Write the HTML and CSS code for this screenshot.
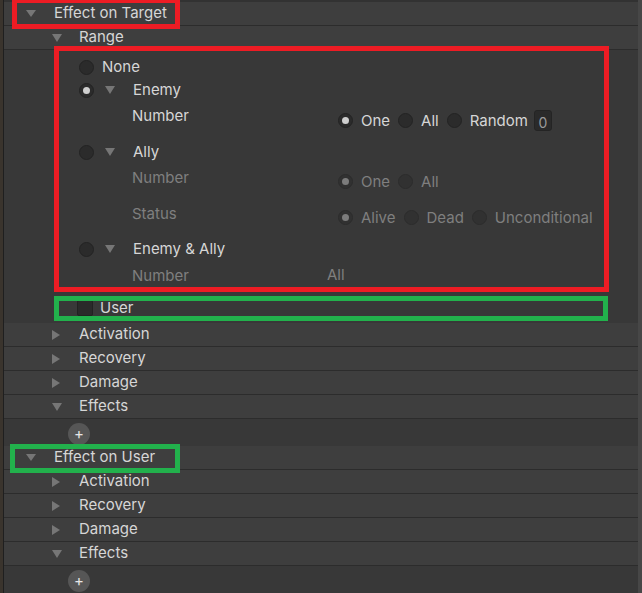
FILE: index.html
```html
<!DOCTYPE html>
<html lang="en">
<head>
    <meta charset="UTF-8">
    <meta name="viewport" content="width=device-width, initial-scale=1.0">
    <title>Skill Inspector</title>
    <link rel="stylesheet" href="styles.css">
</head>
<body>
    <div class="window">
        <div class="edge"></div>
        <div class="panel">
            <div class="row lvl0">
                <span class="fold"><svg width="10" height="7" viewBox="0 0 10 7"><polygon points="0,0 10,0 5,7"/></svg></span>
                <span class="title">Effect on Target</span>
            </div>
            <div class="row lvl1">
                <span class="fold"><svg width="10" height="8" viewBox="0 0 10 8"><polygon points="0,0 10,0 5,8"/></svg></span>
                <span class="title">Range</span>
            </div>

            <div class="range-body">
                <div class="opt opt-none">
                    <span class="radio"></span>
                    <span class="opt-label">None</span>
                </div>
                <div class="opt opt-enemy">
                    <span class="radio on"></span>
                    <span class="fold sub"><svg width="10" height="8" viewBox="0 0 10 8"><polygon points="0,0 10,0 5,8"/></svg></span>
                    <span class="opt-label">Enemy</span>
                </div>
                <div class="field f-num1">
                    <span class="field-label">Number</span>
                    <div class="choices shift4">
                        <span class="radio on"></span><span class="choice">One</span>
                        <span class="radio"></span><span class="choice">All</span>
                        <span class="radio"></span><span class="choice">Random</span>
                        <span class="num-box">0</span>
                    </div>
                </div>
                <div class="opt opt-ally">
                    <span class="radio"></span>
                    <span class="fold sub"><svg width="10" height="8" viewBox="0 0 10 8"><polygon points="0,0 10,0 5,8"/></svg></span>
                    <span class="opt-label">Ally</span>
                </div>
                <div class="field off f-num2">
                    <span class="field-label">Number</span>
                    <div class="choices shift3">
                        <span class="radio on"></span><span class="choice">One</span>
                        <span class="radio"></span><span class="choice">All</span>
                    </div>
                </div>
                <div class="field off f-status">
                    <span class="field-label">Status</span>
                    <div class="choices shift3">
                        <span class="radio on"></span><span class="choice">Alive</span>
                        <span class="radio"></span><span class="choice">Dead</span>
                        <span class="radio"></span><span class="choice">Unconditional</span>
                    </div>
                </div>
                <div class="opt opt-both">
                    <span class="radio"></span>
                    <span class="fold sub"><svg width="10" height="8" viewBox="0 0 10 8"><polygon points="0,0 10,0 5,8"/></svg></span>
                    <span class="opt-label">Enemy &amp; Ally</span>
                </div>
                <div class="field off f-num3">
                    <span class="field-label">Number</span>
                    <span class="value">All</span>
                </div>
                <div class="opt opt-user">
                    <span class="check"></span>
                    <span class="opt-label">User</span>
                </div>
            </div>

            <div class="row lvl1">
                <span class="fold"><svg width="8" height="10" viewBox="0 0 8 10"><polygon points="0,0 8,5 0,10"/></svg></span>
                <span class="title">Activation</span>
            </div>
            <div class="row lvl1">
                <span class="fold"><svg width="8" height="10" viewBox="0 0 8 10"><polygon points="0,0 8,5 0,10"/></svg></span>
                <span class="title">Recovery</span>
            </div>
            <div class="row lvl1">
                <span class="fold"><svg width="8" height="10" viewBox="0 0 8 10"><polygon points="0,0 8,5 0,10"/></svg></span>
                <span class="title">Damage</span>
            </div>
            <div class="row lvl1">
                <span class="fold"><svg width="10" height="8" viewBox="0 0 10 8"><polygon points="0,0 10,0 5,8"/></svg></span>
                <span class="title">Effects</span>
            </div>
            <div class="add-area">
                <button class="add">+</button>
            </div>

            <div class="row lvl0">
                <span class="fold"><svg width="10" height="7" viewBox="0 0 10 7"><polygon points="0,0 10,0 5,7"/></svg></span>
                <span class="title">Effect on User</span>
            </div>
            <div class="row lvl1">
                <span class="fold"><svg width="8" height="10" viewBox="0 0 8 10"><polygon points="0,0 8,5 0,10"/></svg></span>
                <span class="title">Activation</span>
            </div>
            <div class="row lvl1">
                <span class="fold"><svg width="8" height="10" viewBox="0 0 8 10"><polygon points="0,0 8,5 0,10"/></svg></span>
                <span class="title">Recovery</span>
            </div>
            <div class="row lvl1">
                <span class="fold"><svg width="8" height="10" viewBox="0 0 8 10"><polygon points="0,0 8,5 0,10"/></svg></span>
                <span class="title">Damage</span>
            </div>
            <div class="row lvl1">
                <span class="fold"><svg width="10" height="8" viewBox="0 0 10 8"><polygon points="0,0 10,0 5,8"/></svg></span>
                <span class="title">Effects</span>
            </div>
            <div class="add-area last">
                <button class="add">+</button>
            </div>
        </div>
        <div class="scroll"></div>

        <!-- annotation boxes drawn over the inspector -->
        <div class="mark red m-target"></div>
        <div class="mark red m-range"></div>
        <div class="mark green m-user"></div>
        <div class="mark green m-self"></div>
    </div>
</body>
</html>
```

FILE: styles.css
```css
body {
    margin: 0;
    background-color: #383838;
    font-family: Inter, "Noto Sans", sans-serif;
    font-size: 15px;
    color: #d6d6d6;
}
.window {
    position: relative;
    display: flex;
    width: 642px;
    height: 593px;
    overflow: hidden;
}
.edge {
    width: 3px;
    background-color: #3a342d;
    border-right: 1px solid #1f1f1f;
}
.panel {
    flex: 1;
    border-top: 2px solid #323232;
    background-color: #383838;
}
.scroll {
    width: 4px;
    background-color: #474747;
}

/* foldout header rows */
.row {
    display: flex;
    align-items: center;
    height: 23px;
    border-bottom: 1px solid #2c2c2c;
    background-color: #3e3e3e;
}
.row .title {
    line-height: 20px;
    margin-bottom: 2px;
}
.fold {
    display: flex;
    align-items: center;
    width: 10px;
}
.fold svg {
    fill: #767676;
}
.lvl0 {
    padding-left: 22px;
}
.lvl0 .fold {
    margin-right: 18px;
}
.lvl1 {
    padding-left: 48px;
}
.lvl1 .fold {
    margin-right: 17px;
}

/* range options */
.range-body {
    padding: 5px 0 3px 0;
}
.opt,
.field {
    display: flex;
    align-items: center;
    height: 24px;
}
.opt {
    padding-left: 75px;
}
.opt-enemy {
    height: 22px;
}
.opt-label {
    margin-left: 8px;
    line-height: 20px;
    margin-bottom: 1px;
}
.fold.sub {
    margin-left: 11px;
}
.fold.sub + .opt-label {
    margin-left: 18px;
}
.f-num1 { margin-top: 3px; }
.opt-ally { margin-top: 12px; }
.f-num2 { margin-top: 2px; }
.f-status { margin-top: 12px; }
.opt-both { margin-top: 11px; }
.f-num3 { margin-top: 3px; }
.opt-user { margin-top: 8px; }

.field {
    padding-left: 128px;
}
.field-label {
    width: 206px;
    line-height: 20px;
}
.off {
    color: #7f7f7f;
}
.choices {
    display: flex;
    align-items: center;
    gap: 8px;
}
.shift4 { margin-top: 8px; }
.shift3 { margin-top: 6px; }
.value {
    margin-left: -11px;
    margin-bottom: 4px;
}

.radio {
    position: relative;
    width: 13px;
    height: 13px;
    border-radius: 50%;
    background-color: #2b2b2b;
    border: 1px solid #232323;
    flex-shrink: 0;
}
.off .radio {
    background-color: #313131;
    border-color: #2c2c2c;
}
.radio.on::after {
    content: "";
    position: absolute;
    left: 3px;
    top: 3px;
    width: 7px;
    height: 7px;
    border-radius: 50%;
    background-color: #cfcfcf;
}
.off .radio.on::after {
    background-color: #7c7c7c;
}
.check {
    width: 16px;
    height: 16px;
    margin-left: -2px;
    border-radius: 2px;
    background-color: #2a2a2a;
    border: 1px solid #222;
    box-sizing: border-box;
}
.opt-user .opt-label {
    margin-left: 7px;
}
.num-box {
    width: 18px;
    height: 21px;
    margin-left: -2px;
    box-sizing: border-box;
    border: 1px solid #242424;
    border-radius: 3px;
    background-color: #2a2a2a;
    color: #9a9a9a;
    font-size: 14px;
    line-height: 21px;
    text-align: center;
    padding-top: 1px;
}

/* add button */
.add-area {
    height: 27px;
    display: flex;
    align-items: center;
    padding-left: 64px;
}
.add {
    width: 22px;
    height: 22px;
    border-radius: 50%;
    border: none;
    padding: 0;
    background-color: #565656;
    color: #e6e6e6;
    font-family: Inter, sans-serif;
    font-size: 15px;
    line-height: 22px;
    margin-top: 2px;
}

/* annotation overlays */
.mark {
    position: absolute;
    border: 5px solid;
    box-sizing: border-box;
    pointer-events: none;
}
.red {
    border-color: #ed1c24;
}
.green {
    border-color: #22b14c;
}
.m-target {
    left: 12px;
    top: -2px;
    width: 168px;
    height: 31px;
}
.m-range {
    left: 54px;
    top: 46px;
    width: 555px;
    height: 246px;
}
.m-user {
    left: 54px;
    top: 296px;
    width: 554px;
    height: 25px;
}
.m-self {
    left: 10px;
    top: 444px;
    width: 170px;
    height: 29px;
}
```
